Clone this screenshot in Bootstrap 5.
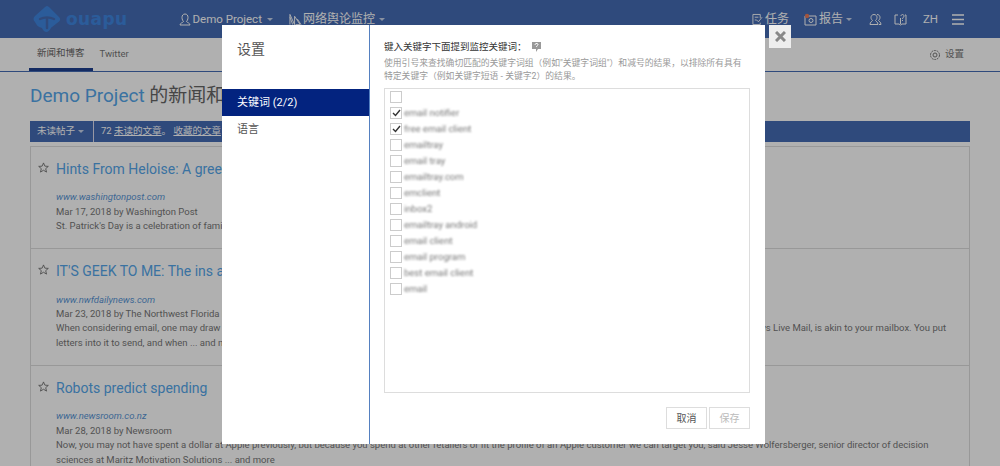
<!DOCTYPE html>
<html lang="zh"><head><meta charset="utf-8">
<link href="https://cdn.jsdelivr.net/npm/bootstrap@5.3.0/dist/css/bootstrap.min.css" rel="stylesheet">
<style>
html,body{height:466px;overflow:hidden}
body{font-family:Roboto,"Noto Sans CJK SC",sans-serif;font-size:9.5px;line-height:14.4px;color:#777;background:#fff;position:relative;text-spacing-trim:space-all}
.topbar{height:38px;background:#456cb4;color:#fff;padding:0 36px 0 33px}
.logo-name{font-family:"DejaVu Sans",sans-serif;font-weight:700;font-size:17px;letter-spacing:.4px;color:#3f86e0;margin-left:5px}
.topitem{font-size:11.500px;color:#fff;display:flex;align-items:center;gap:2px}
.topcjk{font-size:12px}
.caret-mini{width:0;height:0;border-left:3px solid transparent;border-right:3px solid transparent;border-top:3px solid currentColor;margin-left:3px;opacity:.7}
.caret-tight{margin-left:1px}
.subbar{height:34px;border-bottom:1px solid #456cb4;padding:0 36px 0 29px;font-size:9.5px}
.subtab{height:33px;padding:0 7px;display:flex;align-items:center}
.subtab-on{border-bottom:3px solid #1e3f8f;padding:0 8px;color:#666}
.page-title{font-size:19px;font-weight:400;margin:12px 0 0 30px;line-height:24px;color:#666}
.page-title span{color:#55a6ea}
.filterbar{margin:13px 30px 0;height:21px;background:#456cb4;color:#fff;display:flex;align-items:center;font-size:9.5px}
.filter-a{padding:0 7px;height:100%;width:64px;display:flex;align-items:center;border-right:1px solid #dde}
.filter-b{padding:0 7px}
.feed{margin:4px 30px 0;border:1px solid #ddd;border-bottom:0}
.feed-item{padding:8.500px 8px 14.800px 25px;position:relative;border-bottom:1px solid #ddd}
.star-ic{position:absolute;left:7px;top:15px;width:11px;height:11px}
.feed-title{font-size:14px;line-height:26px;color:#55a6ea;margin-bottom:8.800px;white-space:nowrap}
.feed-site{font-style:italic;color:#5a96d6;margin:0}
.feed-line{margin:0}
.veil{position:absolute;inset:0;background:rgba(0,0,0,.31)}
.dialog-box{position:absolute;left:222px;top:25px;width:543px;height:419px;background:#fff;display:flex;color:#666}
.dialog-side{width:148px;border-right:1px solid #5580c0;flex:none}
.dialog-head{font-size:14px;color:#555;padding:15px 15px 0;height:64px;line-height:18px}
.side-on{background:#03237f;color:#fff;height:27px;line-height:27px;padding:0 15px;font-size:11px}
.side-off{height:27px;line-height:27px;padding:0 15px;font-size:11px;color:#555}
.dialog-main{flex:1;padding:15px 15px 0 14px;display:flex;flex-direction:column}
.kw-label{font-size:9.5px;color:#333;line-height:14px;display:flex;align-items:center;gap:5px}
.kw-help{font-size:8.800px;color:#999;line-height:13px;margin:3px 0 0}
.kw-box{border:1px solid #ddd;height:305px;margin-top:5px;padding:0 5px}
.kw-row{height:16px;display:flex;align-items:center;gap:2px}
.kw-check{width:12px;height:12px;border:1px solid #ccc;flex:none;display:flex;align-items:center;justify-content:center}
.kw-text{filter:blur(1px);font-size:9.5px;color:#777}
.dialog-foot{display:flex;justify-content:flex-end;gap:2px;margin-top:14px}
.act-btn{width:41px;height:22px;padding:0;font-size:10px;border:1px solid #ddd;border-radius:0;background:#fff;color:#555}
.act-off{color:#bbb}
.close-x{position:absolute;left:769px;top:25px;width:22px;height:23px;background:#eee;display:flex;align-items:center;justify-content:center}
</style></head><body>
<div class="topbar d-flex align-items-center">
 <svg width="28" height="28" viewBox="0 0 28 28"><path d="M14 1C15 1 16 2 17 3L26 12C27.500 13.500 27.500 15 26 16.500L19 22C17 23.500 17 26 14 27C11 27 10 25 9 23C6 22 4 21 2 17C0 15 0 13 2 11L11 3C12 2 13 1 14 1Z" fill="#3f86e0"/><path d="M7 14C11 12 17 12 21 14M14 13V23" stroke="#456cb4" stroke-width="2.500" fill="none" stroke-linecap="round"/></svg>
 <span class="logo-name">ouapu</span>
 <div class="topitem" style="margin-left:51px"><svg width="12" height="13" viewBox="0 0 12 13" fill="none" stroke="#fff"><path d="M6 1C8 1 9 2.500 9 4.500S8 8 7.500 8.500C8 9.500 11 10 11 12H1C1 10 4 9.500 4.500 8.500 4 8 3 6.500 3 4.500S4 1 6 1Z"/></svg>Demo Project<i class="caret-mini"></i></div>
 <div class="topitem" style="margin-left:16px;gap:1px"><svg width="13" height="13" viewBox="0 0 14 13" fill="none" stroke="#fff"><path d="M1 12V1l5 11V3l6 9H7M1 4l3 8M9 6l4 6"/></svg><span class="topcjk">网络舆论监控</span><i class="caret-mini"></i></div>
 <div class="topitem ms-auto"><svg width="11" height="13" viewBox="0 0 12 13" fill="none" stroke="#fff"><path d="M9 5V1H1v11h8v-2M3 4h4M3 7h2M5 7l2 2 4-5"/></svg><span class="topcjk">任务</span></div>
 <div class="topitem" style="margin-left:15px"><svg width="13" height="13" viewBox="0 0 13 13" fill="none" stroke="#fff"><path d="M1 3h11v9H1z"/><circle cx="7" cy="7.500" r="2"/><circle cx="3" cy="3" r="2.200" fill="#e87a5a" stroke="none"/></svg><span class="topcjk">报告</span><i class="caret-mini caret-tight"></i></div>
 <div class="topitem" style="margin-left:17px"><svg width="13" height="13" viewBox="0 0 13 13" fill="none" stroke="#fff"><path d="M5 1.500C7 1.500 8 3 8 4.500S7 7 6.500 7.500C7 8.500 9 9 9 11.500H1C1 9 3 8.500 3.500 7.500 3 7 2 6 2 4.500S3 1.500 5 1.500ZM8 1.500C10 1.500 11 3 11 4.500S10 7 9.500 7.500C10 8.500 12 9 12 11.500H10"/></svg></div>
 <div class="topitem" style="margin-left:12px"><svg width="13" height="13" viewBox="0 0 13 13" fill="none" stroke="#fff"><path d="M4 2H1v9h4l1.500 1L8 11h4V2h-1M6.500 5v6"/><path d="M7 3C7 1 10 1 10 3 10 4.500 8.500 4.500 8.500 6M8.500 7v1"/></svg></div>
 <div class="topitem" style="margin-left:16px">ZH</div>
 <svg style="margin-left:14px" width="12" height="11" viewBox="0 0 12 11" stroke="#fff" stroke-width="1.500"><path d="M0 1h12M0 5.500h12M0 10h12"/></svg>
</div>
<div class="subbar d-flex align-items-center">
 <div class="subtab subtab-on">新闻和博客</div><div class="subtab">Twitter</div>
 <div class="ms-auto d-flex align-items-center gap-1"><svg width="12" height="12" viewBox="0 0 12 12" fill="none" stroke="#777"><circle cx="6" cy="6" r="2"/><circle cx="6" cy="6" r="4.500" stroke-dasharray="2 .8"/></svg>设置</div>
</div>
<h1 class="page-title"><span>Demo Project</span> 的新闻和博客</h1>
<div class="filterbar"><div class="filter-a">未读帖子<i class="caret-mini"></i></div><div class="filter-b">72 <u>未读的文章</u>。 <u>收藏的文章</u></div></div>
<div class="feed">
 <div class="feed-item"><svg class="star-ic" viewBox="0 0 24 24" fill="none" stroke="#666" stroke-width="1.800"><path d="m12 2 3 7 7.500.6-5.700 4.900 1.800 7.500L12 18l-6.600 4 1.800-7.500L1.500 9.600 9 9z"/></svg>
  <div class="feed-title">Hints From Heloise: A green St. Patrick's Day</div>
  <p class="feed-site">www.washingtonpost.com</p><p class="feed-line">Mar 17, 2018 by Washington Post</p>
  <p class="feed-line">St. Patrick's Day is a celebration of family and friends</p></div>
 <div class="feed-item"><svg class="star-ic" viewBox="0 0 24 24" fill="none" stroke="#666" stroke-width="1.800"><path d="m12 2 3 7 7.500.6-5.700 4.900 1.800 7.500L12 18l-6.600 4 1.800-7.500L1.500 9.600 9 9z"/></svg>
  <div class="feed-title">IT'S GEEK TO ME: The ins and outs of email</div>
  <p class="feed-site">www.nwfdailynews.com</p><p class="feed-line">Mar 23, 2018 by The Northwest Florida Daily News</p>
  <p class="feed-line">When considering email, one may draw an analogy to the postal service, where the mail program that you do use, an email client such as Outlook, Thunderbird or Windows Live Mail, is akin to your mailbox. You put letters into it to send, and when ... and more</p></div>
 <div class="feed-item"><svg class="star-ic" viewBox="0 0 24 24" fill="none" stroke="#666" stroke-width="1.800"><path d="m12 2 3 7 7.500.6-5.700 4.900 1.800 7.500L12 18l-6.600 4 1.800-7.500L1.500 9.600 9 9z"/></svg>
  <div class="feed-title">Robots predict spending</div>
  <p class="feed-site">www.newsroom.co.nz</p><p class="feed-line">Mar 28, 2018 by Newsroom</p>
  <p class="feed-line">Now, you may not have spent a dollar at Apple previously, but because you spend at other retailers or fit the profile of an Apple customer we can target you, said Jesse Wolfersberger, senior director of decision sciences at Maritz Motivation Solutions ... and more</p></div>
</div>
<div class="veil"></div>
<div class="dialog-box">
 <div class="dialog-side"><div class="dialog-head">设置</div><div class="side-on">关键词 (2/2)</div><div class="side-off">语言</div></div>
 <div class="dialog-main">
  <div class="kw-label">键入关键字下面提到监控关键词： <svg width="9" height="10" viewBox="0 0 9 10"><path d="M0 0h9v7H6L4 10V7H0z" fill="#999"/><path d="M3 3C3 1 6 1 6 2.500 6 3.500 4.500 3.500 4.500 5" stroke="#fff" fill="none"/></svg></div>
  <p class="kw-help">使用引号来查找确切匹配的关键字词组（例如"关键字词组"）和减号的结果，以排除所有具有特定关键字（例如关键字短语 - 关键字2）的结果。</p>
  <div class="kw-box" id="kwbox"></div>
  <div class="dialog-foot"><button class="btn act-btn">取消</button><button class="btn act-btn act-off">保存</button></div>
 </div>
</div>
<div class="close-x"><svg width="11" height="11" viewBox="0 0 11 11" stroke="#888" stroke-width="3"><path d="M1 1l9 9M10 1l-9 9"/></svg></div>
<script>
const rows=[["",0],["email notifier",1],["free email client",1],["emailtray",0],["email tray",0],["emailtray.com",0],["emclient",0],["inbox2",0],["emailtray android",0],["email client",0],["email program",0],["best email client",0],["email",0]];
document.getElementById('kwbox').innerHTML=rows.map(r=>`<div class="kw-row"><span class="kw-check">${r[1]?'<svg width="9" height="8" viewBox="0 0 9 8" fill="none" stroke="#333" stroke-width="1.400"><path d="M1 4l2.500 2.500L8 1"/></svg>':''}</span><span class="kw-text">${r[0]}</span></div>`).join('');
</script>
<script src="https://cdn.jsdelivr.net/npm/bootstrap@5.3.0/dist/js/bootstrap.bundle.min.js"></script>
</body></html>
